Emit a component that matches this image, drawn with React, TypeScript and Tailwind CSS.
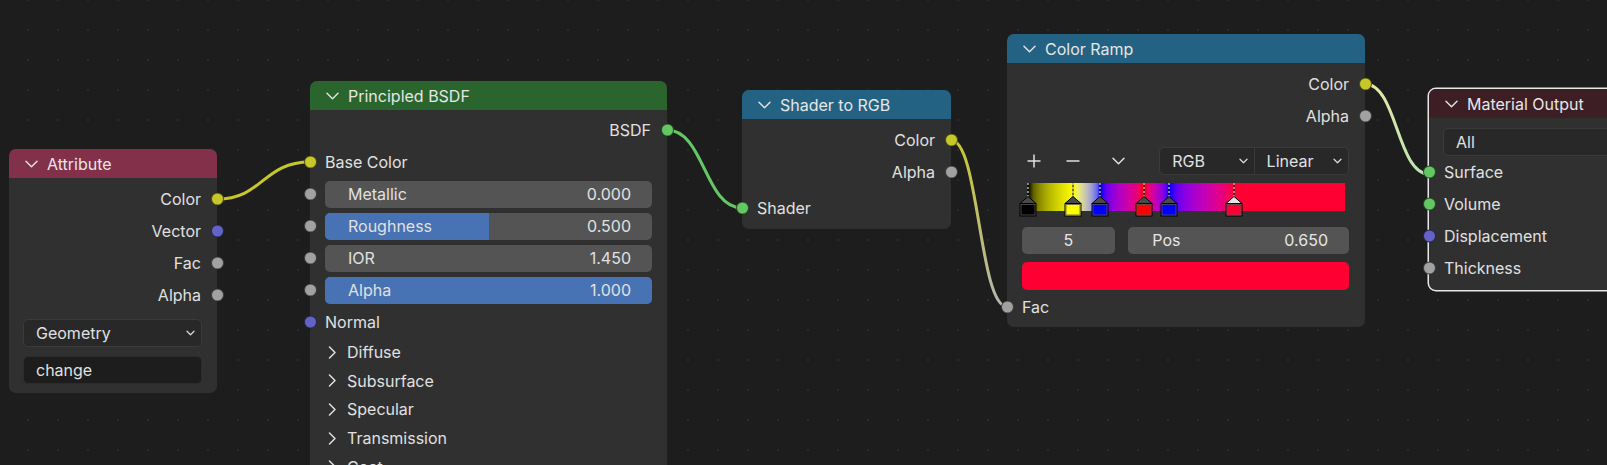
import React from "react"

type Kind = "color" | "float" | "vector" | "shader"

const socketBg: Record<Kind, string> = {
  color: "bg-[#c7c729]",
  float: "bg-[#a1a1a1]",
  vector: "bg-[#6363c7]",
  shader: "bg-[#63c763]",
}

// color ramp stops, sRGB values, drawn in linear space like Blender does
const rampStops: { pos: number; rgb: [number, number, number]; active?: boolean }[] = [
  { pos: 0, rgb: [0, 0, 0] },
  { pos: 0.144, rgb: [1, 1, 0] },
  { pos: 0.229, rgb: [0, 0, 1] },
  { pos: 0.368, rgb: [1, 0, 0] },
  { pos: 0.444, rgb: [0, 0, 1] },
  { pos: 0.65, rgb: [1, 0, 0.2], active: true },
]

const toLin = (c: number) => (c <= 0.04045 ? c / 12.92 : ((c + 0.055) / 1.055) ** 2.4)
const toSrgb = (c: number) => (c <= 0.0031308 ? c * 12.92 : 1.055 * c ** (1 / 2.4) - 0.055)
const css = (rgb: number[]) => `rgb(${rgb.map((v) => Math.round(v * 255)).join(",")})`

function rampGradient() {
  const parts: string[] = []
  for (let i = 0; i < rampStops.length - 1; i++) {
    const a = rampStops[i]
    const b = rampStops[i + 1]
    for (let s = 0; s < 8; s++) {
      const t = s / 8
      const rgb = a.rgb.map((v, k) => toSrgb(toLin(v) + (toLin(b.rgb[k]) - toLin(v)) * t))
      parts.push(`${css(rgb)} ${((a.pos + (b.pos - a.pos) * t) * 100).toFixed(2)}%`)
    }
  }
  const last = rampStops[rampStops.length - 1]
  parts.push(`${css(last.rgb)} ${last.pos * 100}%`, `${css(last.rgb)} 100%`)
  return `linear-gradient(to right, ${parts.join(", ")})`
}

function Socket({ kind, side }: { kind: Kind; side: "left" | "right" }) {
  return (
    <span
      className={`absolute top-1/2 size-[13px] -translate-y-1/2 rounded-full border border-black/60 ${socketBg[kind]} ${
        side === "left" ? "-left-[6.5px]" : "-right-[6.5px]"
      }`}
    />
  )
}

function ChevronDown({ small }: { small?: boolean }) {
  if (small)
    return (
      <svg width="9" height="6" viewBox="0 0 9 6" fill="none" stroke="#d8d8d8" strokeWidth="1.3">
        <path d="M1 1.2l3.5 3.5L8 1.2" strokeLinecap="round" strokeLinejoin="round" />
      </svg>
    )
  return (
    <svg width="13" height="8" viewBox="0 0 13 8" fill="none" stroke="#e0e0e0" strokeWidth="1.5">
      <path d="M1 1.2l5.5 5.5L12 1.2" strokeLinecap="round" strokeLinejoin="round" />
    </svg>
  )
}

function ChevronRight() {
  return (
    <svg width="9" height="13" viewBox="0 0 9 13" fill="none" stroke="#e0e0e0" strokeWidth="1.5">
      <path d="M1.5 1l5.5 5.5L1.5 12" strokeLinecap="round" strokeLinejoin="round" />
    </svg>
  )
}

function Node({
  title,
  headerClass,
  className,
  children,
}: {
  title: string
  headerClass: string
  className: string
  children: React.ReactNode
}) {
  return (
    <div className={`absolute rounded-[7px] bg-[#303030] ${className}`}>
      <div className={`flex h-[29px] items-center gap-[9px] rounded-t-[7px] pl-[16px] text-[#e6e6e6] ${headerClass}`}>
        <ChevronDown />
        <span>{title}</span>
      </div>
      {children}
    </div>
  )
}

function Out({ label, kind }: { label: string; kind: Kind }) {
  return (
    <div className="relative flex h-[32px] items-center justify-end pr-[16px]">
      <span>{label}</span>
      <Socket kind={kind} side="right" />
    </div>
  )
}

function In({ label, kind, className = "" }: { label: string; kind: Kind; className?: string }) {
  return (
    <div className={`relative flex h-[32px] items-center pl-[15px] ${className}`}>
      <Socket kind={kind} side="left" />
      <span>{label}</span>
    </div>
  )
}

function ValueField({ label, value, fill }: { label: string; value: string; fill: number }) {
  return (
    <div className="relative flex h-[32px] items-center px-[15px]">
      <Socket kind="float" side="left" />
      <div className="relative flex h-[27px] flex-1 items-center justify-between overflow-hidden rounded-[5px] bg-[#545454] pl-[23px] pr-[21px]">
        {fill > 0 && <div className="absolute inset-y-0 left-0 bg-[#4772b3]" style={{ width: `${fill * 100}%` }} />}
        <span className="relative">{label}</span>
        <span className="relative">{value}</span>
      </div>
    </div>
  )
}

function Panel({ label }: { label: string }) {
  return (
    <div className="flex h-[28.6px] items-center gap-[10px] pl-[18px]">
      <ChevronRight />
      <span>{label}</span>
    </div>
  )
}

function Dropdown({ label, className = "" }: { label: string; className?: string }) {
  return (
    <div
      className={`flex h-[28px] items-center justify-between rounded-[5px] border border-[#3b3b3b] bg-[#282828] pl-[12px] pr-[6px] ${className}`}
    >
      <span>{label}</span>
      <ChevronDown small />
    </div>
  )
}

function Marker({ color, active }: { color: string; active?: boolean }) {
  return (
    <svg width="18" height="34" viewBox="0 0 18 34" className="block">
      <line x1="9" y1="0" x2="9" y2="14" stroke="#000" strokeWidth="1" />
      <line x1="9" y1="0" x2="9" y2="14" stroke="#fff" strokeWidth="1" strokeDasharray="2 2" />
      <polygon points="9,13.5 17,20.5 1,20.5" fill={active ? "#e6e6e6" : "#4a4a4a"} stroke="#000" strokeWidth="1" strokeLinejoin="round" />
      <rect x="1" y="20.5" width="16" height="12.5" fill={color} stroke="#000" strokeWidth="1" />
      <rect x="2" y="21.5" width="14" height="10.5" fill="none" stroke="#555" strokeWidth="0.8" />
    </svg>
  )
}

function ColorRampBar() {
  return (
    <div className="relative ml-[20.7px] mr-[20px] mt-[8px] h-[28px]" style={{ background: rampGradient() }}>
      {rampStops.map((s) => (
        <div key={s.pos} className="absolute top-0" style={{ left: `calc(${s.pos * 100}% - 9px)` }}>
          <Marker color={css(s.rgb)} active={s.active} />
        </div>
      ))}
    </div>
  )
}

function Wires() {
  return (
    <svg className="absolute inset-0" width="1607" height="465" fill="none">
      <defs>
        <linearGradient id="w3" gradientUnits="userSpaceOnUse" x1="950" y1="140" x2="1007" y2="307">
          <stop offset="0" stopColor="#c7c729" />
          <stop offset="1" stopColor="#b4b4b4" />
        </linearGradient>
        <linearGradient id="w4" gradientUnits="userSpaceOnUse" x1="1365" y1="84" x2="1429" y2="174">
          <stop offset="0" stopColor="#e8e8a4" />
          <stop offset="1" stopColor="#b8e4b4" />
        </linearGradient>
      </defs>
      <path d="M217 199C263 199 263 162 310 162" stroke="#c7c729" strokeWidth="3" />
      <path d="M667 130C704.5 130 704.5 208 742 208" stroke="#63c763" strokeWidth="3" />
      <path d="M951 140C979 140 979 306.7 1007 306.7" stroke="url(#w3)" strokeWidth="3" />
      <path d="M1365 84C1397 84 1397 174 1429 174" stroke="url(#w4)" strokeWidth="3" />
    </svg>
  )
}

export default function App() {
  return (
    <div className="relative h-[465px] w-[1607px] overflow-hidden bg-[#1d1d1d] bg-[radial-gradient(circle,#2a2a2a_1px,transparent_1.4px)] bg-[length:30px_30px] bg-[position:13px_15px] font-['Inter',sans-serif] text-[16px] leading-none text-[#e0e0e0]">
      <Wires />

      <Node title="Attribute" headerClass="bg-[#83304a]" className="left-[9px] top-[149px] w-[208px] pb-[9px] pt-0">
        <div className="pt-[5px]">
          <Out label="Color" kind="color" />
          <Out label="Vector" kind="vector" />
          <Out label="Fac" kind="float" />
          <Out label="Alpha" kind="float" />
        </div>
        <Dropdown label="Geometry" className="ml-[14px] mr-[15px] mt-[8px]" />
        <div className="ml-[14px] mr-[15px] mt-[9px] flex h-[28px] items-center rounded-[5px] border border-[#2c2c2c] bg-[#1d1d1d] pl-[12px]">
          change
        </div>
      </Node>

      <Node title="Principled BSDF" headerClass="bg-[#29652c]" className="left-[310px] top-[81px] w-[357px] pb-[40px]">
        <div className="pt-[4px]">
          <Out label="BSDF" kind="shader" />
          <In label="Base Color" kind="color" />
          <ValueField label="Metallic" value="0.000" fill={0} />
          <ValueField label="Roughness" value="0.500" fill={0.5} />
          <ValueField label="IOR" value="1.450" fill={0} />
          <ValueField label="Alpha" value="1.000" fill={1} />
          <In label="Normal" kind="vector" className="h-[31px]" />
          <Panel label="Diffuse" />
          <Panel label="Subsurface" />
          <Panel label="Specular" />
          <Panel label="Transmission" />
          <Panel label="Coat" />
          <Panel label="Sheen" />
        </div>
      </Node>

      <Node title="Shader to RGB" headerClass="bg-[#246283]" className="left-[742px] top-[90px] w-[209px] pb-[5px]">
        <div className="pt-[5px]">
          <Out label="Color" kind="color" />
          <Out label="Alpha" kind="float" />
          <In label="Shader" kind="shader" className="mt-[4px]" />
        </div>
      </Node>

      <Node title="Color Ramp" headerClass="bg-[#246283]" className="left-[1007px] top-[34px] w-[358px] pb-[4.3px]">
        <div className="pt-[5px]">
          <Out label="Color" kind="color" />
          <Out label="Alpha" kind="float" />
        </div>
        <div className="ml-[14.7px] mr-[16px] mt-[15px] flex h-[28px] items-center">
          <div className="flex w-[25px] justify-center">
            <svg width="14" height="14" viewBox="0 0 14 14" stroke="#e0e0e0" strokeWidth="1.5">
              <path d="M7 0.5v13M0.5 7h13" />
            </svg>
          </div>
          <div className="ml-[13.5px] flex w-[25px] justify-center">
            <svg width="14" height="14" viewBox="0 0 14 14" stroke="#e0e0e0" strokeWidth="1.5">
              <path d="M0.5 7h13" />
            </svg>
          </div>
          <div className="ml-[21px] flex w-[25px] justify-center">
            <ChevronDown />
          </div>
          <div className="ml-[28px] flex h-full flex-1 overflow-hidden rounded-[5px] border border-[#3b3b3b] bg-[#282828]">
            <div className="flex flex-1 items-center justify-between border-r border-[#3b3b3b] pl-[12px] pr-[6px]">
              <span>RGB</span>
              <ChevronDown small />
            </div>
            <div className="flex flex-1 items-center justify-between pl-[12px] pr-[6px]">
              <span>Linear</span>
              <ChevronDown small />
            </div>
          </div>
        </div>
        <ColorRampBar />
        <div className="ml-[14.7px] mr-[16px] mt-[15.7px] flex h-[27px] gap-[13.3px]">
          <div className="flex w-[93.3px] items-center justify-center rounded-[5px] bg-[#545454] text-[#e6e6e6]">5</div>
          <div className="flex flex-1 items-center justify-between rounded-[5px] bg-[#545454] pl-[24px] pr-[21px] text-[#e6e6e6]">
            <span>Pos</span>
            <span>0.650</span>
          </div>
        </div>
        <div className="ml-[14.7px] mr-[16px] mt-[8px] h-[28px] rounded-[5px] bg-[#ff0033]" />
        <In label="Fac" kind="float" className="mt-[1px]" />
      </Node>

      <Node
        title="Material Output"
        headerClass="bg-[#3d1e25]"
        className="left-[1429px] top-[89px] w-[260px] pb-[6px] ring-[1.5px] ring-[#e8e8e8]"
      >
        <Dropdown label="All" className="ml-[14px] mr-[14px] mt-[10px]" />
        <In label="Surface" kind="shader" />
        <In label="Volume" kind="shader" />
        <In label="Displacement" kind="vector" />
        <In label="Thickness" kind="float" />
      </Node>
    </div>
  )
}
